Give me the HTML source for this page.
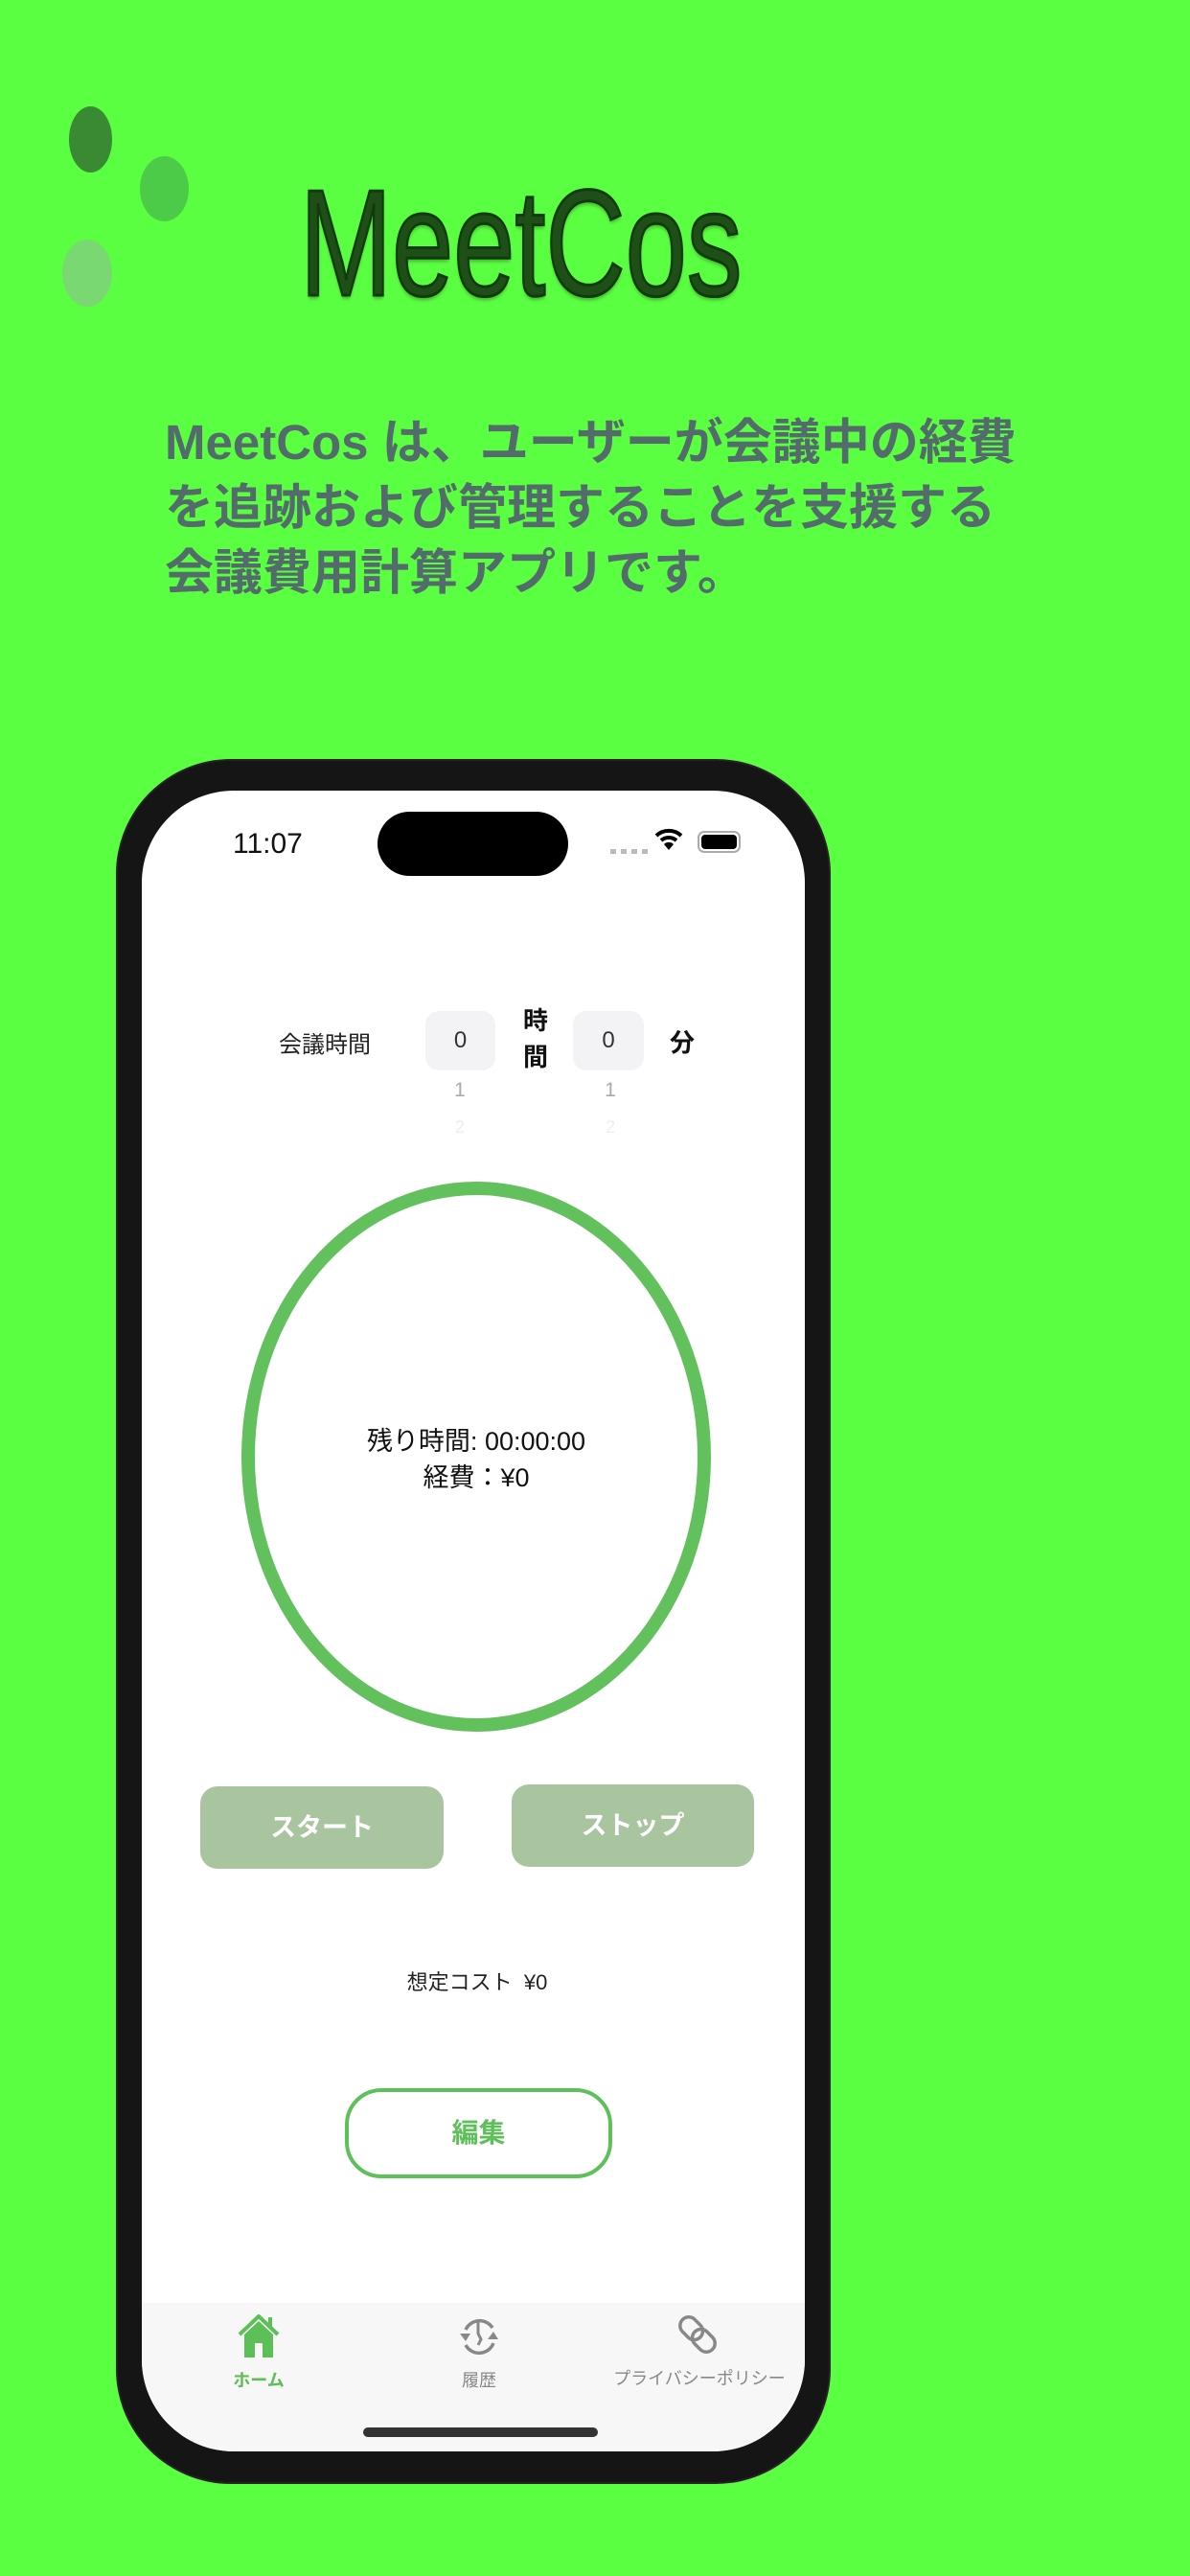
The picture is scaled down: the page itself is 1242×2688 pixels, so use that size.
<!DOCTYPE html>
<html><head><meta charset="utf-8">
<style>
*{margin:0;padding:0;box-sizing:border-box}
body{width:1242px;height:2688px;background:#5bff41;position:relative;overflow:hidden;font-family:"Liberation Sans","Noto Sans CJK JP",sans-serif}
.a{position:absolute}
.dot{position:absolute;border-radius:50%}
.title{left:313px;top:160px;font-size:158px;color:#1d4f17;-webkit-text-stroke:3px #123a0e;transform:scaleX(0.73);transform-origin:left top;text-shadow:0 4px 4px rgba(0,0,0,.25);white-space:nowrap;line-height:1.2}
.desc{left:172px;top:428px;font-size:51px;font-weight:bold;color:#536b6a;line-height:68px;white-space:nowrap}
.frame{left:123px;top:794px;width:742px;height:1796px;background:#151515;border-radius:118px;box-shadow:0 0 0 2px #2a1f2a}
.screen{left:148px;top:825px;width:692px;height:1733px;background:#fff;border-radius:96px;overflow:hidden}
.c{text-align:center;white-space:nowrap}
</style></head><body>
<div class="dot" style="left:72px;top:111px;width:45px;height:69px;background:#3a8a33"></div>
<div class="dot" style="left:146px;top:163px;width:51px;height:68px;background:#4ccb49"></div>
<div class="dot" style="left:65px;top:250px;width:52px;height:70px;background:#7ad872"></div>
<div class="a title">MeetCos</div>
<div class="a desc">MeetCos は、ユーザーが会議中の経費<br>を追跡および管理することを支援する<br>会議費用計算アプリです。</div>

<div class="a frame"></div>
<div class="a screen">
  <div class="a" style="left:0;top:1578px;width:692px;height:160px;background:#f7f7f7"></div>
</div>
<!-- status bar -->
<div class="a" style="left:243px;top:864px;font-size:30px;color:#111">11:07</div>
<div class="a" style="left:394px;top:847px;width:199px;height:67px;background:#000;border-radius:34px"></div>
<div class="a" style="left:637px;top:886px;width:40px;height:5px;background:repeating-linear-gradient(90deg,#bbb 0 6px,transparent 6px 11px)"></div>
<svg class="a" style="left:683px;top:862px" width="30" height="28" viewBox="0 0 30 28"><path d="M2 10 A19 19 0 0 1 28 10" stroke="#000" stroke-width="4" fill="none"/><path d="M7 15 A12 12 0 0 1 23 15" stroke="#000" stroke-width="4" fill="none"/><path d="M15 25 L10 19 A7 7 0 0 1 20 19Z" fill="#000"/></svg>
<div class="a" style="left:728px;top:867px;width:45px;height:23px;border:2px solid #aaa;border-radius:7px;padding:2px"><div style="width:100%;height:100%;background:#000;border-radius:4px"></div></div>

<!-- meeting time row -->
<div class="a" style="left:291px;top:1070px;font-size:24px;color:#222">会議時間</div>
<div class="a c" style="left:444px;top:1055px;width:73px;height:62px;background:#f3f3f5;border-radius:14px;font-size:24px;line-height:62px;color:#333">0</div>
<div class="a" style="left:546px;top:1046px;font-size:26px;font-weight:bold;line-height:38px;color:#111">時<br>間</div>
<div class="a c" style="left:598px;top:1055px;width:74px;height:62px;background:#f3f3f5;border-radius:14px;font-size:24px;line-height:62px;color:#333">0</div>
<div class="a" style="left:699px;top:1068px;font-size:26px;font-weight:bold;color:#111">分</div>
<div class="a c" style="left:460px;top:1126px;width:40px;font-size:21px;color:#aaa">1</div>
<div class="a c" style="left:617px;top:1126px;width:40px;font-size:21px;color:#aaa">1</div>
<div class="a c" style="left:460px;top:1166px;width:40px;font-size:18px;color:#eee">2</div>
<div class="a c" style="left:617px;top:1166px;width:40px;font-size:18px;color:#eee">2</div>

<!-- circle -->
<div class="a" style="left:252px;top:1233px;width:490px;height:574px;border:14px solid #62c15d;border-radius:50%"></div>
<div class="a c" style="left:297px;top:1485px;width:400px;font-size:27px;color:#111;line-height:38px">残り時間: 00:00:00<br>経費：¥0</div>

<!-- buttons -->
<div class="a c" style="left:209px;top:1864px;width:254px;height:86px;background:#a9c5a0;border-radius:18px;color:#fff;font-weight:bold;font-size:27px;line-height:86px">スタート</div>
<div class="a c" style="left:534px;top:1862px;width:253px;height:86px;background:#a9c5a0;border-radius:18px;color:#fff;font-weight:bold;font-size:27px;line-height:86px">ストップ</div>
<div class="a c" style="left:398px;top:2051px;width:200px;font-size:22px;color:#222">想定コスト &nbsp;¥0</div>
<div class="a c" style="left:360px;top:2179px;width:279px;height:94px;border:4px solid #5dc058;border-radius:38px;color:#5dc058;font-weight:bold;font-size:28px;line-height:86px">編集</div>

<!-- tab bar -->
<svg class="a" style="left:247px;top:2414px" width="46" height="48" viewBox="0 0 46 48"><path d="M3 22 L23 3 L43 22" stroke="#5cbf57" stroke-width="4" fill="none" stroke-linejoin="round"/><rect x="33" y="4" width="4" height="10" fill="#5cbf57"/><path d="M8 22 L23 8 L38 22 V46 H8Z" fill="#5cbf57"/><rect x="19" y="31" width="8" height="15" fill="#f7f7f7"/></svg>
<div class="a c" style="left:230px;top:2470px;width:80px;font-size:18px;font-weight:bold;color:#5cbf57">ホーム</div>
<svg class="a" style="left:478px;top:2415px" width="44" height="46" viewBox="0 0 44 46"><path d="M8 16 A16 16 0 0 1 36 14" stroke="#888" stroke-width="3.5" fill="none"/><path d="M37 30 A16 16 0 0 1 8 32" stroke="#888" stroke-width="3.5" fill="none"/><path d="M2 20 L8 28 L13 20Z" fill="#888"/><path d="M31 26 L37 18 L42 26Z" fill="#888"/><path d="M21 8 V20 L24 26 L21 32" stroke="#888" stroke-width="3" fill="none"/></svg>
<div class="a c" style="left:460px;top:2470px;width:80px;font-size:18px;color:#888">履歴</div>
<svg class="a" style="left:706px;top:2412px" width="44" height="48" viewBox="0 0 44 48"><g transform="rotate(-45 22 24)" stroke="#888" stroke-width="3.5" fill="none"><rect x="13" y="2" width="18" height="26" rx="9"/><rect x="13" y="20" width="18" height="26" rx="9"/></g></svg>
<div class="a c" style="left:640px;top:2468px;width:180px;font-size:18px;color:#888">プライバシーポリシー</div>
<div class="a" style="left:379px;top:2533px;width:245px;height:10px;background:#333;border-radius:5px"></div>
</body></html>
